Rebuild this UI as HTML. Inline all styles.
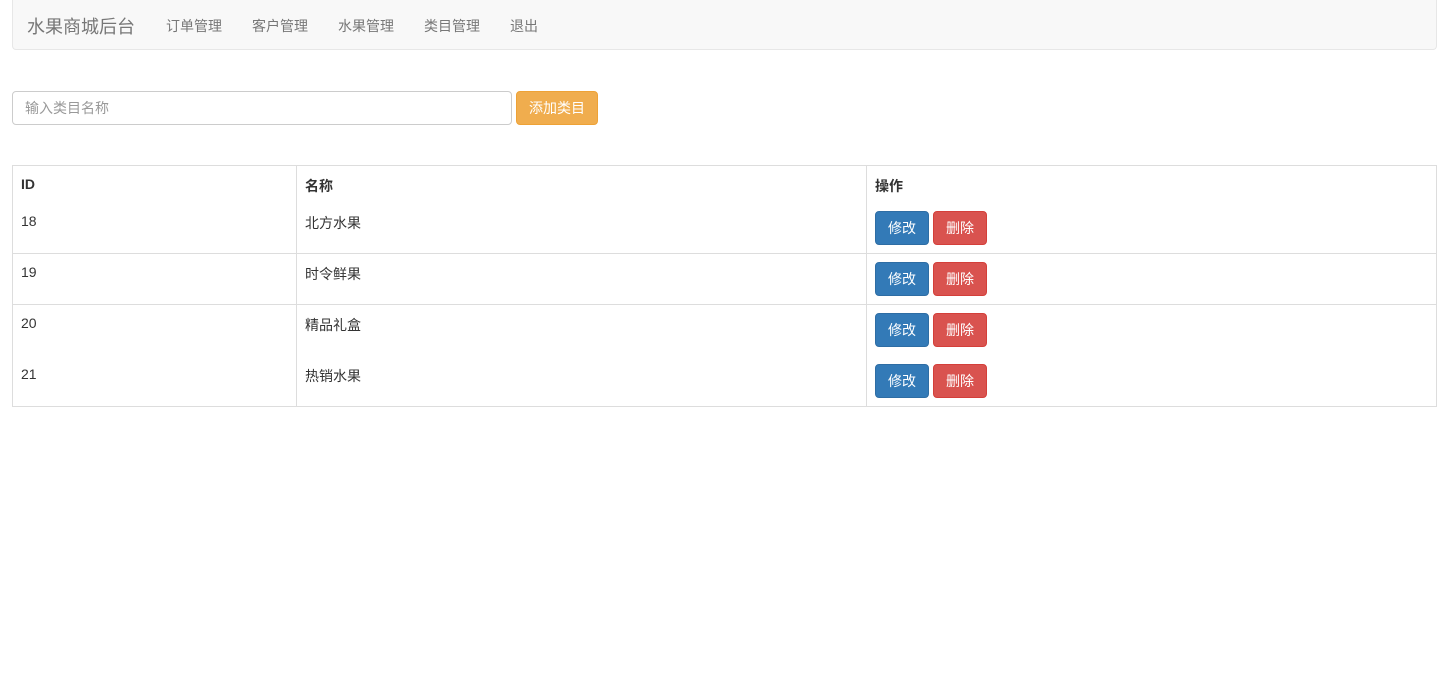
<!DOCTYPE html>
<html><head><meta charset="utf-8"><style>
body{margin:0;width:1448px;height:685px;background:#fff;font-family:"Liberation Sans","Noto Sans CJK SC",sans-serif;font-size:14px;color:#333;position:relative;overflow:hidden}
.a{position:absolute;white-space:nowrap}
.nav{left:12px;top:0;width:1423px;height:49px;background:#f8f8f8;border:1px solid #e7e7e7;border-top:none;border-radius:0 0 4px 4px}
.nl{color:#777;top:16px}
.inp{left:12px;top:91px;width:498px;height:32px;border:1px solid #ccc;border-radius:4px;color:#999;line-height:32px;text-indent:12px}
.btn{color:#fff;border-radius:4px;text-align:center;line-height:32px;height:32px}
.tb{left:12px;top:165px;width:1423px;height:240px;border:1px solid #ddd}
.hl{left:12px;width:1425px;height:1px;background:#ddd}
.vl{top:165px;width:1px;height:242px;background:#ddd}
.b{font-weight:bold}
.ed{width:52px;background:#337ab7;border:1px solid #2e6da4}
.de{width:52px;background:#d9534f;border:1px solid #d43f3a}
</style></head><body>
<div class="a nav"></div>
<div class="a" style="left:27px;top:13px;font-size:18px;color:#777">水果商城后台</div>
<div class="a nl" style="left:166px">订单管理</div>
<div class="a nl" style="left:252px">客户管理</div>
<div class="a nl" style="left:338px">水果管理</div>
<div class="a nl" style="left:424px">类目管理</div>
<div class="a nl" style="left:510px">退出</div>
<div class="a inp">输入类目名称</div>
<div class="a btn" style="left:516px;top:91px;width:80px;background:#f0ad4e;border:1px solid #eea236">添加类目</div>
<div class="a tb"></div>
<div class="a vl" style="left:296px"></div>
<div class="a vl" style="left:866px"></div>
<div class="a hl" style="top:253px"></div>
<div class="a hl" style="top:304px"></div>
<div class="a b" style="left:21px;top:176px">ID</div>
<div class="a b" style="left:305px;top:176px">名称</div>
<div class="a b" style="left:875px;top:176px">操作</div>

<div class="a" style="left:21px;top:213px">18</div><div class="a" style="left:305px;top:213px">北方水果</div>
<div class="a btn ed" style="left:875px;top:211px">修改</div><div class="a btn de" style="left:933px;top:211px">删除</div>
<div class="a" style="left:21px;top:264px">19</div><div class="a" style="left:305px;top:264px">时令鲜果</div>
<div class="a btn ed" style="left:875px;top:262px">修改</div><div class="a btn de" style="left:933px;top:262px">删除</div>
<div class="a" style="left:21px;top:315px">20</div><div class="a" style="left:305px;top:315px">精品礼盒</div>
<div class="a btn ed" style="left:875px;top:313px">修改</div><div class="a btn de" style="left:933px;top:313px">删除</div>
<div class="a" style="left:21px;top:366px">21</div><div class="a" style="left:305px;top:366px">热销水果</div>
<div class="a btn ed" style="left:875px;top:364px">修改</div><div class="a btn de" style="left:933px;top:364px">删除</div>
</body></html>
